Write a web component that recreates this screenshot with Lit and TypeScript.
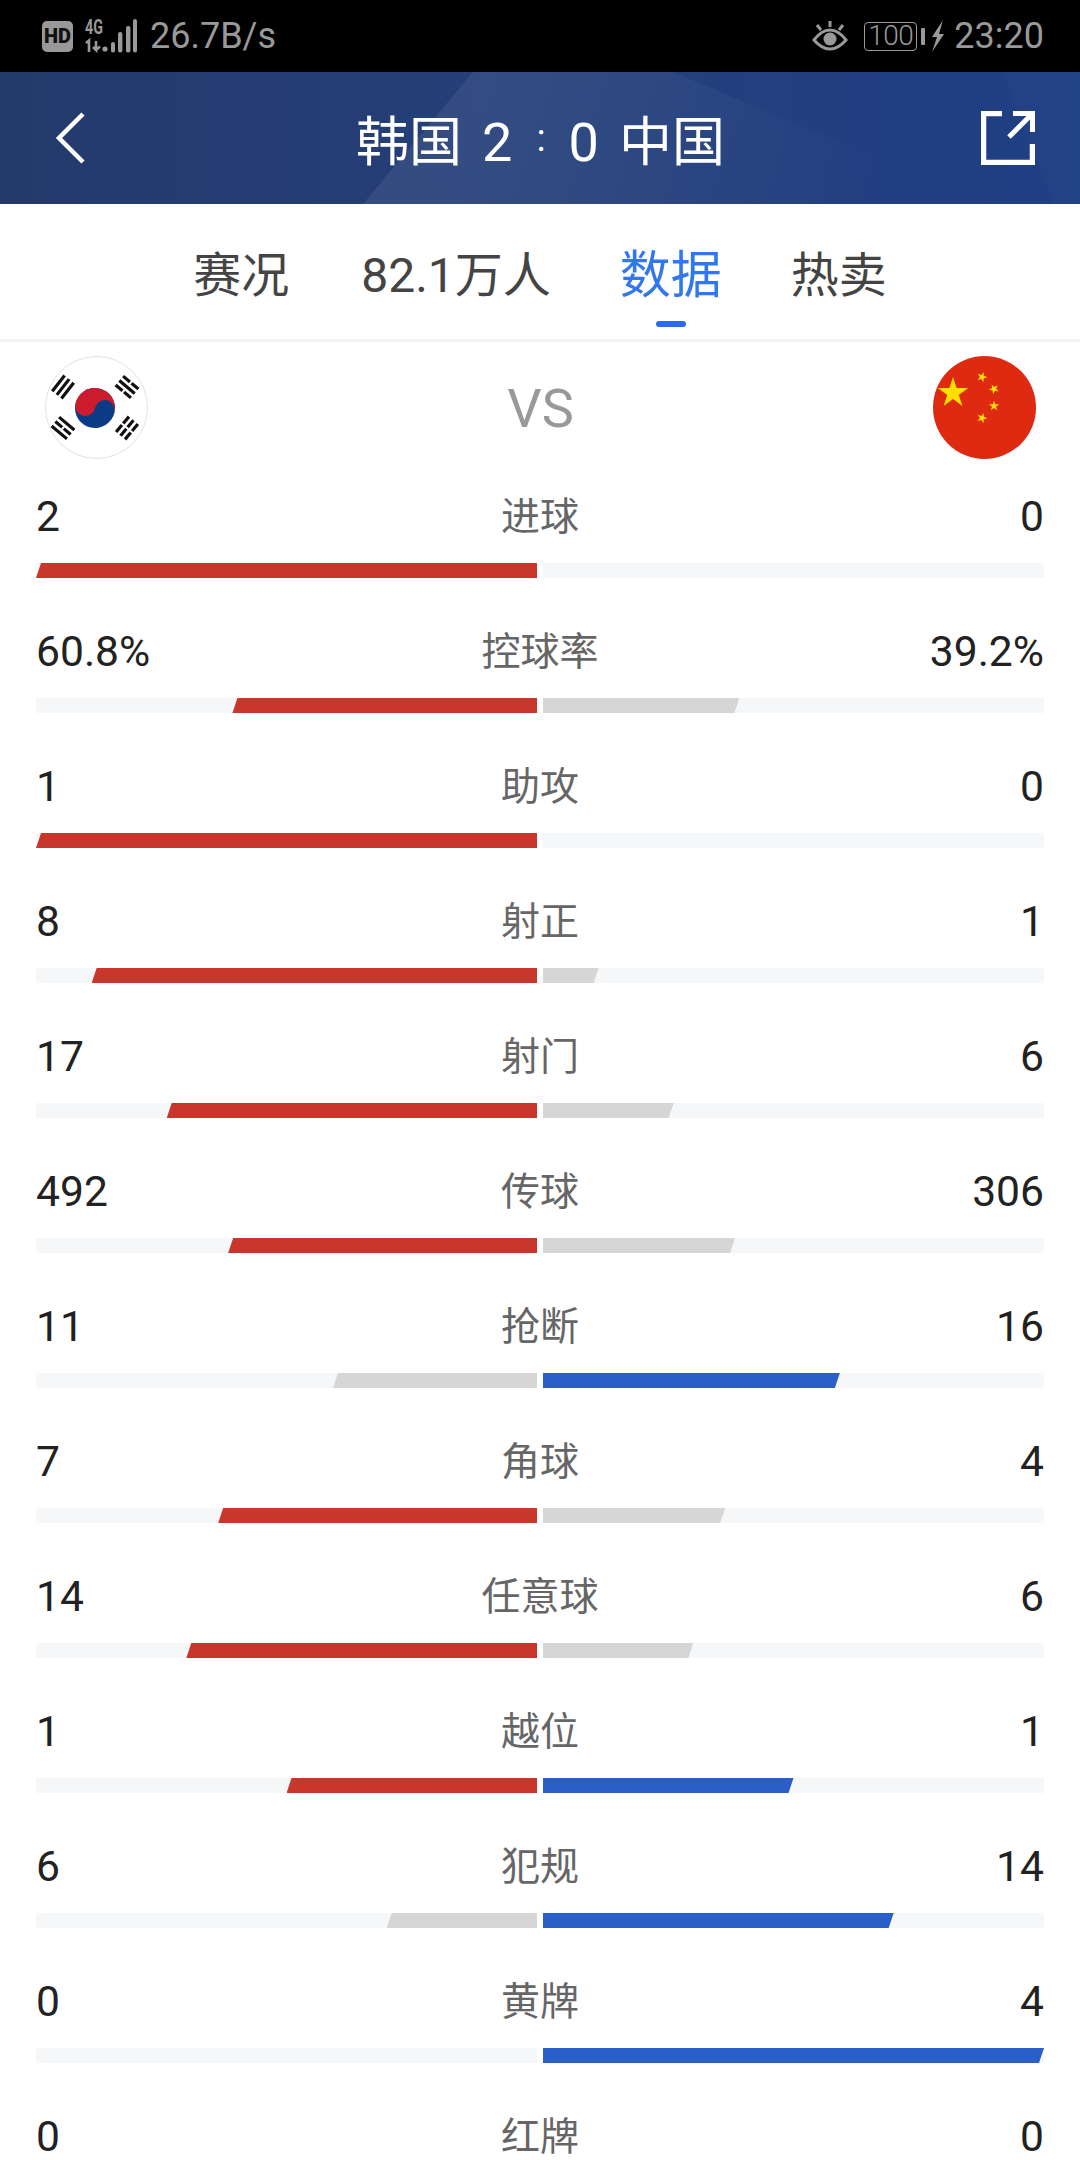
import { LitElement, html, css, svg } from 'lit';
import { customElement } from 'lit/decorators.js';

const TABS = ['赛况', '82.1万人', '数据', '热卖'];
const ACTIVE_TAB = 2;

const STATS = [
  { label: '进球', home: '2', away: '0' },
  { label: '控球率', home: '60.8%', away: '39.2%' },
  { label: '助攻', home: '1', away: '0' },
  { label: '射正', home: '8', away: '1' },
  { label: '射门', home: '17', away: '6' },
  { label: '传球', home: '492', away: '306' },
  { label: '抢断', home: '11', away: '16' },
  { label: '角球', home: '7', away: '4' },
  { label: '任意球', home: '14', away: '6' },
  { label: '越位', home: '1', away: '1' },
  { label: '犯规', home: '6', away: '14' },
  { label: '黄牌', home: '0', away: '4' },
  { label: '红牌', home: '0', away: '0' },
];

function starPoints(cx: number, cy: number, r: number, rot = 0) {
  const pts: string[] = [];
  for (let i = 0; i < 10; i++) {
    const rad = i % 2 === 0 ? r : r * 0.382;
    const a = ((-90 + rot + i * 36) * Math.PI) / 180;
    pts.push(`${(cx + rad * Math.cos(a)).toFixed(2)},${(cy + rad * Math.sin(a)).toFixed(2)}`);
  }
  return pts.join(' ');
}

// one of the four corner signs on the Korean flag; true = unbroken bar
function trigram(cx: number, cy: number, angle: number, bars: boolean[]) {
  return svg`<g transform="translate(${cx} ${cy}) rotate(${angle})" fill="#111">
    ${bars.map((solid, i) => {
      const y = (i - 1) * 5.8 - 1.6;
      return solid
        ? svg`<rect x="-10" y=${y} width="20" height="3.2"></rect>`
        : svg`<rect x="-10" y=${y} width="9" height="3.2"></rect><rect x="1" y=${y} width="9" height="3.2"></rect>`;
    })}
  </g>`;
}

@customElement('app-root')
export class AppRoot extends LitElement {
  static override styles = css`
    :host {
      display: block;
      width: 1080px;
      height: 2160px;
      overflow: hidden;
      background: #fff;
      font-family: Roboto, 'Noto Sans CJK SC', sans-serif;
    }

    /* status bar */
    .status {
      height: 72px;
      background: #000;
      color: #999;
      display: flex;
      align-items: center;
      justify-content: space-between;
      padding: 0 36px 0 42px;
      font-size: 36px;
    }
    .status-left,
    .status-right {
      display: flex;
      align-items: center;
    }
    .hd {
      width: 31px;
      height: 31px;
      border-radius: 5px;
      background: #999;
      color: #111;
      font-size: 20px;
      font-weight: 900;
      display: flex;
      align-items: center;
      justify-content: center;
      margin-right: 12px;
    }
    .signal {
      display: block;
      margin: 0 13px 4px 0;
    }
    .eye {
      display: block;
      margin-right: 16px;
    }
    .battery {
      width: 53px;
      height: 29px;
      box-sizing: border-box;
      border: 1.5px solid #999;
      border-radius: 4px;
      font-size: 28px;
      font-weight: 300;
      line-height: 26px;
      text-align: center;
      letter-spacing: -0.5px;
      margin-right: 4px;
    }
    .nub {
      width: 4px;
      height: 17px;
      background: #999;
      border-radius: 1px;
      margin-right: 6px;
    }
    .bolt {
      display: block;
      margin-right: 10px;
    }

    /* header */
    .header {
      position: relative;
      height: 132px;
      background: linear-gradient(90deg, #243a6b 0%, #25407a 50%, #1f3f85 100%);
      color: #fff;
      display: flex;
      align-items: center;
      justify-content: space-between;
      padding: 0 45px 0 40px;
    }
    .header-bg {
      position: absolute;
      inset: 0;
      width: 100%;
      height: 100%;
    }
    .header-icon {
      position: relative;
      display: block;
    }
    .title {
      position: relative;
      display: flex;
      align-items: baseline;
      font-size: 53px;
      gap: 20px;
      margin-left: 6px;
    }
    .title .score {
      font-size: 54px;
    }
    .title .colon {
      align-self: center;
      font-size: 38px;
      margin: 0 3px 0 4px;
    }

    /* tabs */
    .tabs {
      height: 135px;
      border-bottom: 3px solid #f3f3f3;
      box-sizing: content-box;
      display: flex;
      justify-content: center;
      gap: 69px;
    }
    .tab {
      position: relative;
      font-size: 48px;
      line-height: 144px;
      color: #444;
    }
    .tab:first-child {
      margin-right: 3px;
    }
    .tab.active {
      font-size: 51px;
      color: #3178ee;
    }
    .tab.active::after {
      content: '';
      position: absolute;
      left: 50%;
      top: 117px;
      width: 30px;
      height: 6px;
      margin-left: -15px;
      border-radius: 3px;
      background: #2c69f0;
    }

    /* teams */
    .teams {
      height: 129px;
      padding: 14px 44px 0 45px;
      display: flex;
      justify-content: space-between;
    }
    .flag {
      display: block;
      width: 103px;
      height: 103px;
    }
    .vs {
      font-size: 54px;
      line-height: 106px;
      color: #999;
    }

    /* stat rows */
    .stat {
      height: 135px;
      padding: 0 36px;
    }
    .line {
      height: 60px;
      box-sizing: border-box;
      padding-top: 2px;
      display: grid;
      grid-template-columns: 1fr auto 1fr;
      align-items: center;
      margin-bottom: 18px;
      font-size: 42.6px;
      line-height: 1;
      color: #222;
    }
    .label {
      font-size: 39px;
      line-height: 1;
      color: #666;
      padding-top: 2px;
    }
    .away {
      text-align: right;
    }
    .bars {
      display: flex;
      gap: 6px;
    }
    .track {
      flex: 1;
      height: 15px;
      background: #f6f7f9;
      display: flex;
    }
    .track.left {
      justify-content: flex-end;
    }
    .fill {
      height: 100%;
    }
    .left .fill {
      clip-path: polygon(5px 0, 100% 0, 100% 100%, 0 100%);
    }
    .right .fill {
      clip-path: polygon(0 0, 100% 0, calc(100% - 5px) 100%, 0 100%);
    }
    .red {
      background: #c9372c;
    }
    .blue {
      background: #2a5fc9;
    }
    .gray {
      background: #d6d6d6;
    }
  `;

  private renderStatus() {
    return html`
      <div class="status">
        <div class="status-left">
          <div class="hd">HD</div>
          <svg class="signal" width="52" height="38" viewBox="0 -4 52 38">
            <text x="0" y="15" font-family="Roboto" font-size="20" font-weight="700" fill="#999" textLength="18" lengthAdjust="spacingAndGlyphs">4G</text>
            <path d="M1 24l3-2.500V33M11 22v9l-3-3M11 31l4-3.500" fill="none" stroke="#999" stroke-width="2.600"></path>
            <g fill="#999">
              <circle cx="20" cy="30" r="2.600"></circle>
              <rect x="26" y="23" width="4" height="10.500" rx="2"></rect>
              <rect x="33" y="13" width="4.400" height="20.500" rx="2"></rect>
              <rect x="41" y="7" width="4.400" height="26.500" rx="2"></rect>
              <rect x="48" y="0" width="4" height="33.500" rx="2"></rect>
            </g>
          </svg>
          <span>26.7B/s</span>
        </div>
        <div class="status-right">
          <svg class="eye" width="36" height="30" viewBox="0 0 36 30">
            <path d="M2 19C8 11 13 9 18 9s10 2 16 10c-6 7-11 9-16 9s-10-2-16-9z" fill="none" stroke="#999" stroke-width="3"></path>
            <circle cx="18" cy="18" r="6.500" fill="#999"></circle>
            <path d="M18 0v6M5 4l4 5M31 4l-4 5" stroke="#999" stroke-width="3" fill="none"></path>
          </svg>
          <div class="battery">100</div>
          <div class="nub"></div>
          <svg class="bolt" width="13" height="32" viewBox="0 0 13 32">
            <path d="M12 0L1 17H6L1 32L13 14H8L12 0Z" fill="#999"></path>
          </svg>
          <span>23:20</span>
        </div>
      </div>
    `;
  }

  private renderHeader() {
    return html`
      <div class="header">
        <svg class="header-bg" viewBox="0 0 1080 132" preserveAspectRatio="none">
          <defs>
            <linearGradient id="sheen" gradientUnits="userSpaceOnUse" x1="480" y1="0" x2="880" y2="132">
              <stop offset="0" stop-color="#fff" stop-opacity="0.07"></stop>
              <stop offset="1" stop-color="#fff" stop-opacity="0"></stop>
            </linearGradient>
          </defs>
          <polygon points="473,0 673,0 985,132 363,132" fill="url(#sheen)"></polygon>
          <polygon points="1003,0 1080,0 1080,132 1053,132" fill="#fff" fill-opacity="0.015"></polygon>
        </svg>
        <svg class="header-icon" width="54" height="54" viewBox="0 0 54 54">
          <path d="M43 3L19 27l24 24" fill="none" stroke="#fff" stroke-width="4.500"></path>
        </svg>
        <div class="title">
          <span>韩国</span>
          <span class="score">2</span>
          <span class="colon">:</span>
          <span class="score">0</span>
          <span>中国</span>
        </div>
        <svg class="header-icon" width="54" height="54" viewBox="0 0 54 54">
          <path d="M21 2.500H2.500V51.500H51.500V33" fill="none" stroke="#fff" stroke-width="5.500"></path>
          <path d="M28 26L51 3M32 2.500H51.500V21" fill="none" stroke="#fff" stroke-width="5"></path>
        </svg>
      </div>
    `;
  }

  private renderTabs() {
    return html`
      <div class="tabs">
        ${TABS.map((t, i) => html`<div class="tab ${i === ACTIVE_TAB ? 'active' : ''}">${t}</div>`)}
      </div>
    `;
  }

  private renderTeams() {
    return html`
      <div class="teams">
        <svg class="flag" viewBox="0 0 103 103">
          <circle cx="51.500" cy="51.500" r="51" fill="#fff" stroke="#e2e2e2" stroke-width="1"></circle>
          ${trigram(18, 31, -52, [true, true, true])}
          ${trigram(82, 31, 40, [false, true, false])}
          ${trigram(18, 72, 40, [true, false, true])}
          ${trigram(82, 72, -50, [false, false, false])}
          <g transform="translate(50 52) rotate(12)">
            <circle r="20" fill="#0b3b84"></circle>
            <path d="M-20 0A20 20 0 0 1 20 0A10 10 0 0 0 0 0A10 10 0 0 1 -20 0Z" fill="#cd1b2e"></path>
          </g>
        </svg>
        <div class="vs">VS</div>
        <svg class="flag" viewBox="0 0 103 103">
          <circle cx="51.500" cy="51.500" r="51.500" fill="#dd2a10"></circle>
          <polygon points=${starPoints(20, 37, 16)} fill="#ffde00"></polygon>
          <polygon points=${starPoints(49, 21, 5.4, 20)} fill="#ffde00"></polygon>
          <polygon points=${starPoints(61, 33, 5.4, 45)} fill="#ffde00"></polygon>
          <polygon points=${starPoints(61, 50, 5.4, 0)} fill="#ffde00"></polygon>
          <polygon points=${starPoints(49, 62, 5.4, 20)} fill="#ffde00"></polygon>
        </svg>
      </div>
    `;
  }

  private renderStat(s: { label: string; home: string; away: string }) {
    const h = parseFloat(s.home);
    const a = parseFloat(s.away);
    const total = h + a;
    const homePct = total ? (h / total) * 100 : 0;
    const awayPct = total ? (a / total) * 100 : 0;
    const homeColor = h >= a ? 'red' : 'gray';
    const awayColor = a >= h ? 'blue' : 'gray';
    return html`
      <div class="stat">
        <div class="line">
          <span>${s.home}</span>
          <span class="label">${s.label}</span>
          <span class="away">${s.away}</span>
        </div>
        <div class="bars">
          <div class="track left">
            <div class="fill ${homeColor}" style="width:${homePct}%"></div>
          </div>
          <div class="track right">
            <div class="fill ${awayColor}" style="width:${awayPct}%"></div>
          </div>
        </div>
      </div>
    `;
  }

  override render() {
    return html`
      ${this.renderStatus()} ${this.renderHeader()} ${this.renderTabs()} ${this.renderTeams()}
      ${STATS.map((s) => this.renderStat(s))}
    `;
  }
}
